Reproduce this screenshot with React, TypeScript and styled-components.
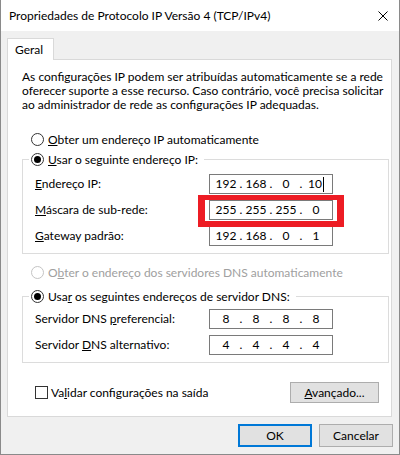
import React from "react";
import styled, { createGlobalStyle } from "styled-components";

const GlobalStyle = createGlobalStyle`
  * { box-sizing: border-box; }
  body {
    margin: 0;
    background: #f0f0f0;
    font-family: Lato, "Liberation Sans", sans-serif;
    font-size: 12px;
    color: #000;
  }
`;

// window frame
const Window = styled.div`
  width: 400px;
  height: 455px;
  border: 1px solid #8a8a8a;
  border-top: none;
  background: #f0f0f0;
  display: flex;
  flex-direction: column;
`;

const TitleBar = styled.div`
  height: 31px;
  flex-shrink: 0;
  background: #fff;
  display: flex;
  align-items: center;
  justify-content: space-between;
  padding-left: 8px;
`;

const Title = styled.span`
  line-height: 16px;
`;

const CloseButton = styled.div`
  width: 32px;
  height: 31px;
  display: flex;
  align-items: center;
  justify-content: center;
`;

const Body = styled.div`
  padding: 7px 6px 0 6px;
  display: flex;
  flex-direction: column;
`;

// tabs
const TabStrip = styled.div`
  display: flex;
`;

const Tab = styled.div`
  width: 47px;
  height: 22px;
  margin-bottom: -1px;
  padding: 3px 0 0 7px;
  line-height: 16px;
  background: #fff;
  border: 1px solid #d9d9d9;
  border-bottom: none;
  position: relative;
  z-index: 1;
`;

const Panel = styled.div`
  width: 385px;
  height: 358px;
  background: #fff;
  border: 1px solid #d9d9d9;
  padding: 10px 0 0 14px;
`;

const Intro = styled.p`
  margin: 0;
  line-height: 14px;
  white-space: nowrap;
`;

// radio / checkbox
const Option = styled.label<{ $disabled?: boolean; $top?: number }>`
  display: flex;
  align-items: center;
  height: 16px;
  margin-left: 9px;
  margin-top: ${(p) => p.$top ?? 0}px;
  color: ${(p) => (p.$disabled ? "#a0a0a0" : "#000")};
  white-space: nowrap;
`;

const Radio = styled.span<{ $checked?: boolean; $disabled?: boolean }>`
  width: 13px;
  height: 13px;
  border-radius: 50%;
  border: 1px solid ${(p) => (p.$disabled ? "#c4c4c4" : "#333")};
  background: #fff;
  display: flex;
  align-items: center;
  justify-content: center;
  margin-right: 4px;
  flex-shrink: 0;

  &::after {
    content: "";
    width: 7px;
    height: 7px;
    border-radius: 50%;
    background: #000;
    display: ${(p) => (p.$checked ? "block" : "none")};
  }
`;

const Checkbox = styled.span`
  width: 13px;
  height: 13px;
  border: 1px solid #333;
  background: #fff;
  margin-right: 3px;
  flex-shrink: 0;
`;

const U = styled.u`
  text-decoration: underline;
  text-underline-offset: 1px;
`;

// group box
const Group = styled.fieldset<{ $top: number }>`
  width: 367px;
  margin: ${(p) => p.$top}px 0 0 0;
  padding: 0;
  border: 1px solid #dcdcdc;
`;

const Legend = styled.legend`
  display: flex;
  align-items: center;
  height: 16px;
  margin-left: 6px;
  padding: 0 6px 0 2px;
  white-space: nowrap;
`;

const Rows = styled.div<{ $top: number }>`
  display: grid;
  grid-template-columns: 174px 124px;
  row-gap: 6px;
  align-items: center;
  padding: ${(p) => p.$top}px 0 7px 12px;
`;

const FieldLabel = styled.span`
  line-height: 16px;
`;

const FieldWrap = styled.div`
  position: relative;
  width: 124px;
  height: 20px;
`;

const IpBox = styled.div`
  width: 124px;
  height: 20px;
  border: 1px solid #7a7a7a;
  background: #fff;
  display: flex;
  align-items: center;
  padding-left: 3px;
  position: relative;
  z-index: 1;
`;

const Octet = styled.span`
  width: 26px;
  line-height: 16px;
  display: flex;
  justify-content: center;
  align-items: center;
`;

const Dot = styled.span`
  width: 4px;
  text-align: center;
  line-height: 16px;
`;

const Caret = styled.span`
  width: 1px;
  height: 15px;
  background: #000;
  margin-left: 1px;
`;

const Highlight = styled.div`
  position: absolute;
  left: -11px;
  right: -11px;
  top: -5px;
  bottom: -7px;
  border-style: solid;
  border-color: #ed1c24;
  border-width: 5px 7px 6px 7px;
  z-index: 2;
  pointer-events: none;
`;

const BottomRow = styled.div`
  width: 367px;
  height: 21px;
  margin-top: 19px;
  padding: 0 10px 0 13px;
  display: flex;
  align-items: center;
  justify-content: space-between;
`;

const CheckOption = styled.label`
  display: flex;
  align-items: center;
  white-space: nowrap;
`;

const Button = styled.button<{ $default?: boolean; $w: number; $h: number }>`
  width: ${(p) => p.$w}px;
  height: ${(p) => p.$h}px;
  padding: 0;
  font: inherit;
  color: #000;
  background: #e1e1e1;
  border: ${(p) => (p.$default ? "2px solid #0078d7" : "1px solid #adadad")};
`;

const Footer = styled.div`
  display: flex;
  justify-content: flex-end;
  gap: 7px;
  margin-top: 7px;
`;

function IpField({ value, caret }: { value: string[]; caret?: boolean }) {
  return (
    <IpBox>
      {value.map((v, i) => (
        <React.Fragment key={i}>
          {i > 0 && <Dot>.</Dot>}
          <Octet>
            {v}
            {caret && i === 3 && <Caret />}
          </Octet>
        </React.Fragment>
      ))}
    </IpBox>
  );
}

export default function App() {
  return (
    <>
      <GlobalStyle />
      <Window>
        <TitleBar>
          <Title>Propriedades de Protocolo IP Versão 4 (TCP/IPv4)</Title>
          <CloseButton>
            <svg width="10" height="10" viewBox="0 0 10 10">
              <path d="M0.5 0.5 L9.5 9.5 M9.5 0.5 L0.5 9.5" stroke="#000" strokeWidth="1" />
            </svg>
          </CloseButton>
        </TitleBar>
        <Body>
          <TabStrip>
            <Tab>Geral</Tab>
          </TabStrip>
          <Panel>
            <Intro>
              As configurações IP podem ser atribuídas automaticamente se a rede
              <br />
              oferecer suporte a esse recurso. Caso contrário, você precisa solicitar
              <br />
              ao administrador de rede as configurações IP adequadas.
            </Intro>

            <Option $top={19}>
              <Radio />
              <span>
                <U>O</U>bter um endereço IP automaticamente
              </span>
            </Option>

            <Group $top={4}>
              <Legend>
                <Radio $checked />
                <span>
                  <U>U</U>sar o seguinte endereço IP:
                </span>
              </Legend>
              <Rows $top={7}>
                <FieldLabel>
                  <U>E</U>ndereço IP:
                </FieldLabel>
                <FieldWrap>
                  <IpField value={["192", "168", "0", "10"]} caret />
                </FieldWrap>
                <FieldLabel>
                  <U>M</U>áscara de sub-rede:
                </FieldLabel>
                <FieldWrap>
                  <IpField value={["255", "255", "255", "0"]} />
                  <Highlight />
                </FieldWrap>
                <FieldLabel>
                  <U>G</U>ateway padrão:
                </FieldLabel>
                <FieldWrap>
                  <IpField value={["192", "168", "0", "1"]} />
                </FieldWrap>
              </Rows>
            </Group>

            <Option $top={10} $disabled>
              <Radio $disabled />
              <span>
                O<U>b</U>ter o endereço dos servidores DNS automaticamente
              </span>
            </Option>

            <Group $top={8}>
              <Legend>
                <Radio $checked />
                <span>
                  Usa<U>r</U> os seguintes endereços de servidor DNS:
                </span>
              </Legend>
              <Rows $top={5}>
                <FieldLabel>
                  Servidor DNS <U>p</U>referencial:
                </FieldLabel>
                <FieldWrap>
                  <IpField value={["8", "8", "8", "8"]} />
                </FieldWrap>
                <FieldLabel>
                  Servidor <U>D</U>NS alternativo:
                </FieldLabel>
                <FieldWrap>
                  <IpField value={["4", "4", "4", "4"]} />
                </FieldWrap>
              </Rows>
            </Group>

            <BottomRow>
              <CheckOption>
                <Checkbox />
                <span>
                  Va<U>l</U>idar configurações na saída
                </span>
              </CheckOption>
              <Button $w={89} $h={21}>
                <U>A</U>vançado...
              </Button>
            </BottomRow>
          </Panel>
          <Footer>
            <Button $default $w={74} $h={23}>
              OK
            </Button>
            <Button $w={74} $h={23}>
              Cancelar
            </Button>
          </Footer>
        </Body>
      </Window>
    </>
  );
}
